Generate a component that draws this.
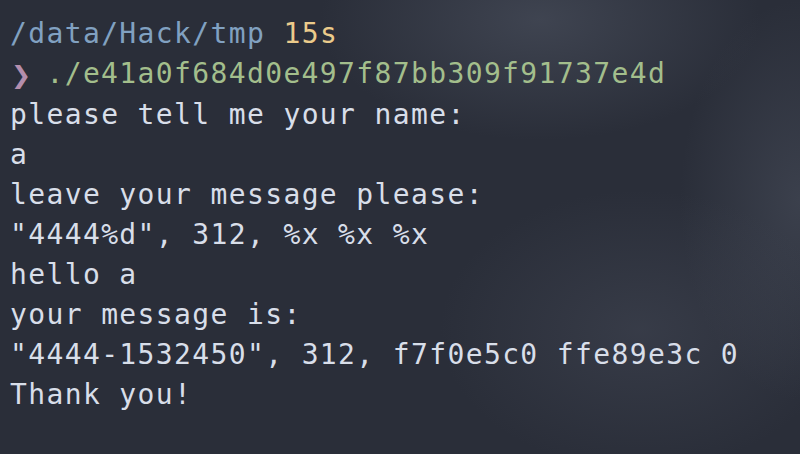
import React from 'react';

const lines = [
  'please tell me your name:',
  'a',
  'leave your message please:',
  '"4444%d", 312, %x %x %x',
  'hello a',
  'your message is:',
  '"4444-1532450", 312, f7f0e5c0 ffe89e3c 0',
  'Thank you!',
];

export default function App() {
  return (
    <div className="relative h-[454px] w-[800px] overflow-hidden bg-[#2a2e39]">
      {/* soft glass highlights behind the terminal */}
      <div className="absolute inset-0 bg-[radial-gradient(ellipse_220px_120px_at_540px_20px,rgba(80,86,100,0.55),transparent)]" />
      <div className="absolute inset-0 bg-[radial-gradient(ellipse_120px_200px_at_800px_200px,rgba(80,86,100,0.45),transparent)]" />
      <div className="absolute inset-0 bg-[radial-gradient(ellipse_200px_140px_at_640px_330px,rgba(75,80,94,0.4),transparent)]" />

      <div className="relative whitespace-pre pl-[10px] pt-[14px] font-['DejaVu_Sans_Mono',monospace] text-[28px] leading-[40px] tracking-[1.37px] text-[#d8dee9]">
        <div>
          <span className="text-[#81a1c1]">/data/Hack/tmp</span>{' '}
          <span className="text-[#ebcb8b]">15s</span>
        </div>
        <div>
          <span className="inline-block w-[18.2px] pl-[1px] font-['DejaVu_Sans',sans-serif] text-[24px] font-bold text-[#b48ead]">❯</span>{' '}
          <span className="text-[#a3be8c]">./e41a0f684d0e497f87bb309f91737e4d</span>
        </div>
        {lines.map((line, i) => (
          <div key={i}>{line}</div>
        ))}
      </div>
    </div>
  );
}
